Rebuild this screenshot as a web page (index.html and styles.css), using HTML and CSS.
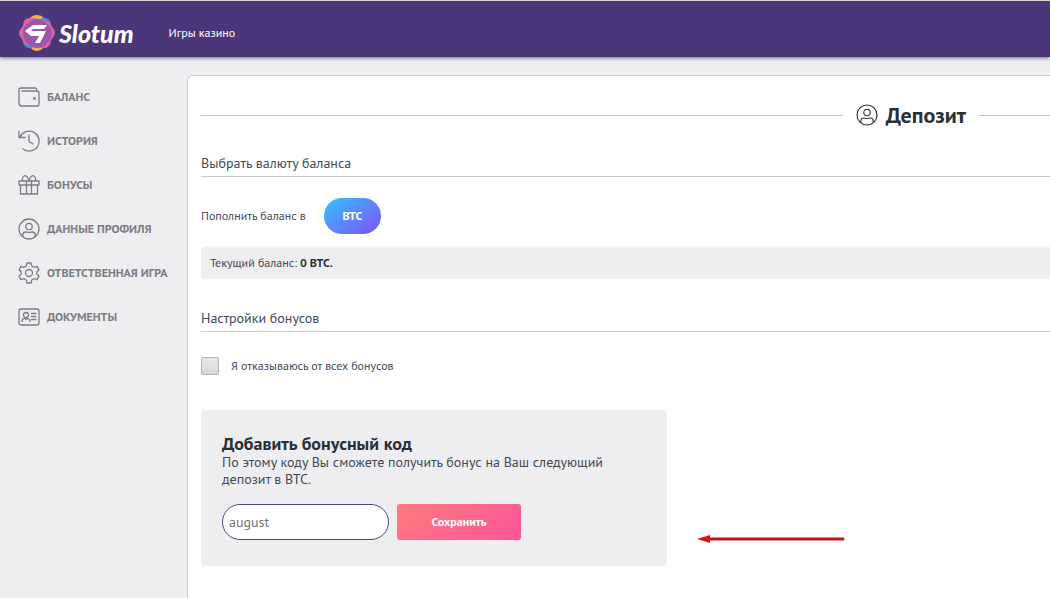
FILE: index.html
```html
<!DOCTYPE html>
<html lang="ru">
<head>
<meta charset="utf-8">
<title>Slotum — Депозит</title>
<link rel="stylesheet" href="styles.css">
</head>
<body>
<svg class="sprite" aria-hidden="true">
  <symbol id="user" viewBox="0 0 22 22">
    <circle cx="11" cy="11" r="10"/><circle cx="11" cy="8.500" r="3.200"/>
    <path d="M4.800 18.500v-1.500c0-2 1.200-3 3-3 1.300 0 1.700.5 3.200.5s1.900-.5 3.200-.5c1.800 0 3 1 3 3v1.500"/>
  </symbol>
</svg>
<header class="header">
  <a class="logo" href="#">
    <svg class="logo-mark" viewBox="0 0 36 36" aria-hidden="true">
      <path fill="#e9b04b" d="M18 0c5 0 6 3 11 5l-1 25c-4 2-5 6-10 6s-6-4-10-6L7 5c5-2 6-5 11-5z"/>
      <path fill="#3c8fd0" d="M23 3c6-1 10 3 9 9L13 33c-6 1-10-3-9-9z"/>
      <path fill="#e45f9d" d="M13 3C7 2 4 6 4 11c-5 5-5 9-1 13 2 5 5 7 10 7l10 2c6 1 9-3 9-8 5-5 5-9 1-13-2-5-5-7-10-7z"/>
      <path fill="#9858ae" d="M18 4c4 0 7 2 10 5s5 5 5 9-2 7-5 10-6 5-10 5-7-2-10-5-4-6-4-10 1-6 4-9 6-5 10-5z"/>
      <path d="M14 10h14l-3 4H14l-2 2h15l-6 12h-5l4-7h-8l-6-5z" fill="#fff"/>
    </svg>
    <span class="logo-text">Slotum</span>
  </a>
  <nav><a class="nav-link" href="#">Игры казино</a></nav>
</header>
<div class="layout">
  <nav class="sidebar">
    <a class="side-link" href="#"><svg class="icon" viewBox="0 0 22 22"><path d="M19 4.500V4a2 2 0 0 0-2-2H3a2 2 0 0 0-2 2v13a3 3 0 0 0 3 3h15a2 2 0 0 0 2-2V7a2 2 0 0 0-2-2H4"/><circle cx="16.500" cy="12.500" r=".8"/></svg>Баланс</a>
    <a class="side-link" href="#"><svg class="icon" viewBox="0 0 22 22"><path d="M2 7A10 10 0 1 1 5 19M1 1.500V7.500h6M11 5v6.500l4 2.500"/></svg>История</a>
    <a class="side-link" href="#"><svg class="icon" viewBox="0 0 22 22"><path d="M1 7h20v4H1zM2.500 11v9h17v-9M8.500 7v13M13.500 7v13M11 7C10 3 8 1 6 2S4 6 5 7M11 7c1-4 3-6 5-5s2 4 1 5"/></svg>Бонусы</a>
    <a class="side-link" href="#"><svg class="icon"><use href="#user"/></svg>Данные профиля</a>
    <a class="side-link" href="#"><svg class="icon" viewBox="0 0 22 22"><circle cx="11" cy="11" r="3.500"/><path d="M9 1h4l.7 3 2.300 1.300L19 4.400l2 3.400L18.800 10v2l2.200 2.200-2 3.400-3-.9-2.300 1.300-.7 3H9l-.7-3L6 16.700l-3 .9-2-3.400L3.200 12v-2L1 7.800l2-3.400 3 .9L8.300 4z"/></svg>Ответственная игра</a>
    <a class="side-link" href="#"><svg class="icon" viewBox="0 0 22 22"><rect x="1" y="3" width="20" height="16" rx="2"/><circle cx="8" cy="9" r="2.500"/><path d="M4 15.500c0-2 1-3 2.500-3.200L8 13.500l1.500-1.200c1.500.2 2.500 1.200 2.500 3.200M13.500 7.500H18M13.500 10.500H18M13.500 13.500H18"/></svg>Документы</a>
  </nav>
  <main class="panel">
    <div class="title-row">
      <h1 class="title"><svg class="icon"><use href="#user"/></svg>Депозит</h1>
    </div>
    <h2 class="section-title">Выбрать валюту баланса</h2>
    <div class="currency"><span>Пополнить баланс в</span><button class="pill" type="button">BTC</button></div>
    <p class="balance">Текущий баланс: <b>0 BTC.</b></p>
    <h2 class="section-title">Настройки бонусов</h2>
    <label class="decline"><input class="check" type="checkbox">Я отказываюсь от всех бонусов</label>
    <div class="promo-row">
      <form class="promo">
        <h3 class="promo-title">Добавить бонусный код</h3>
        <label class="promo-text" for="code">По этому коду Вы сможете получить бонус на Ваш следующий депозит в BTC.</label>
        <div class="promo-fields">
          <input class="code" id="code" type="text" value="august">
          <button class="save" type="button">Сохранить</button>
        </div>
      </form>
      <svg class="arrow" viewBox="0 0 148 10" aria-hidden="true"><path d="M12 5h134" stroke="#c5161d" stroke-width="3" stroke-linecap="round"/><path d="M0 5l13-4v8z" fill="#dc1016"/></svg>
    </div>
  </main>
</div>
</body>
</html>
```
FILE: styles.css
```css
* { box-sizing: border-box; }
body {
  margin: 0;
  min-height: 100vh;
  display: flex;
  flex-direction: column;
  background: #eeeef1;
  color: #434a54;
  font: 12px/16px "PT Sans", "Noto Sans", sans-serif;
  overflow-x: hidden;
}
a { color: inherit; text-decoration: none; }
h1, h2, h3, p { margin: 0; }
button, input { font: inherit; }
.sprite { display: none; }
.header {
  display: flex;
  align-items: center;
  gap: 35px;
  height: 57px;
  padding: 8px 19px 0;
  background: #4c367a;
  border-top: 1px solid #d9d5e3;
  box-shadow: 0 1px 4px #6b6480;
  color: #fff;
}
.logo { display: flex; align-items: center; gap: 4px; }
.logo-mark { width: 36px; height: 36px; }
.logo-text { font: italic 900 25px/32px Lato, sans-serif; }
.layout { display: flex; flex: 1; }
.sidebar { width: 187px; flex: none; padding: 18px 0 0 18px; }
.side-link {
  display: flex;
  align-items: center;
  gap: 7px;
  height: 44px;
  color: #7c7d83;
  font-weight: 700;
  text-transform: uppercase;
  white-space: nowrap;
}
.icon { width: 22px; height: 22px; flex: none; fill: none; stroke: currentColor; stroke-width: 1.300; stroke-linejoin: round; stroke-linecap: round; }
.panel {
  flex: 1;
  min-width: 0;
  margin-top: 18px;
  padding: 23px 0 0 13px;
  background: #fff;
  border: solid #cfcce2;
  border-width: 1px 0 0 1px;
  border-top-left-radius: 6px;
}
.title-row { display: flex; align-items: center; gap: 13px; }
.title-row::before, .title-row::after { content: ""; height: 1px; background: #c1bed2; }
.title-row::before { flex: 1; }
.title-row::after { width: 71px; }
.title { display: flex; align-items: center; gap: 8px; color: #2a3038; font-size: 22px; line-height: 32px; }
.title .icon { stroke-width: 1.100; }
.section-title { padding-bottom: 3px; border-bottom: 1px solid #c9c8d1; font-size: 14px; line-height: 20px; font-weight: 400; }
.title-row + .section-title { margin-top: 22px; }
.currency { display: flex; align-items: center; gap: 18px; margin-top: 21px; }
.pill {
  width: 57px;
  height: 36px;
  padding: 0;
  border: 0;
  border-radius: 18px;
  background: linear-gradient(145deg, #3cb6ff 10%, #8050f5);
  color: #fff;
  font-weight: 700;
}
.balance { margin: 13px 0 29px; padding: 8px 9px; border-radius: 4px 0 0 4px; background: #eeeef1; }
.balance b { color: #2a3038; }
.decline { display: flex; align-items: center; gap: 12px; margin-top: 25px; }
.check {
  appearance: none;
  width: 18px;
  height: 18px;
  margin: 0;
  border: 1px solid #b4b4b4;
  border-radius: 2px;
  background: linear-gradient(#e8e8e8, #d9d9d9);
}
.promo-row { display: flex; align-items: flex-end; gap: 30px; margin-top: 35px; }
.promo { width: 466px; padding: 24px 21px 26px; border-radius: 4px; background: #eeeef1; }
.promo-title { color: #2a3038; font-size: 18px; line-height: 20px; }
.promo-text { display: block; max-width: 400px; font-size: 14px; line-height: 17px; }
.promo-fields { display: flex; gap: 8px; margin-top: 16px; }
.code { width: 167px; height: 36px; padding: 0 6px; border: 1px solid #51437c; border-radius: 18px; background: #fff; color: #757575; font-size: 14px; }
.save { width: 124px; height: 36px; border: 0; border-radius: 3px; background: linear-gradient(145deg, #ff7780 10%, #fb559b); color: #fff; font-weight: 700; }
.arrow { width: 148px; height: 10px; margin-bottom: 22px; }
```
